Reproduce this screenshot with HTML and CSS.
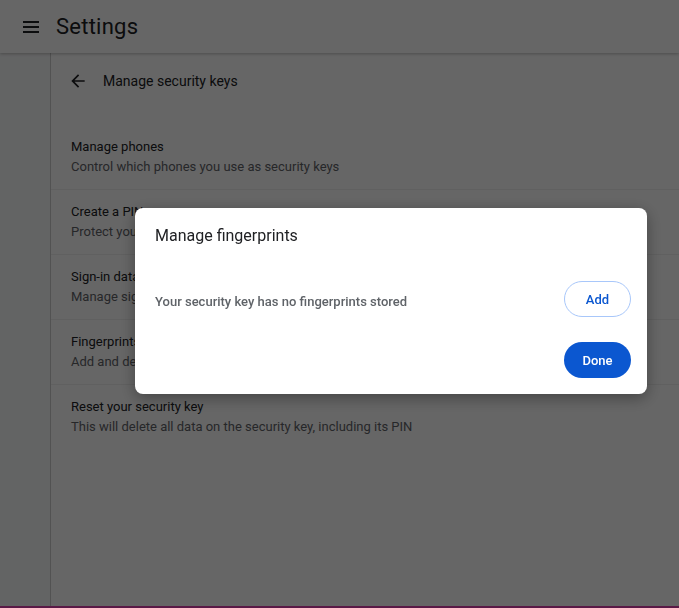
FILE: index.html
```html
<!DOCTYPE html>
<html lang="en">
<head>
    <meta charset="UTF-8">
    <meta name="viewport" content="width=device-width, initial-scale=1.0">
    <title>Settings - Manage security keys</title>
    <link rel="stylesheet" href="styles.css">
</head>
<body>
    <header class="toolbar">
        <button class="menu-button" aria-label="Main menu">
            <svg width="16" height="14" viewBox="0 0 16 14">
                <rect x="0" y="1" width="16" height="2" fill="currentColor"/>
                <rect x="0" y="6" width="16" height="2" fill="currentColor"/>
                <rect x="0" y="11" width="16" height="2" fill="currentColor"/>
            </svg>
        </button>
        <h1 class="toolbar-title">Settings</h1>
    </header>

    <div class="layout">
        <nav class="sidebar"></nav>

        <main class="card">
            <div class="subpage-title">
                <button class="back-button" aria-label="Back">
                    <svg width="20" height="20" viewBox="0 0 24 24">
                        <path d="M20 11H7.83l5.59-5.59L12 4l-8 8 8 8 1.41-1.41L7.83 13H20v-2z" fill="currentColor"/>
                    </svg>
                </button>
                <h2>Manage security keys</h2>
            </div>

            <div class="rows">
                <div class="row">
                    <div class="row-label">Manage phones</div>
                    <div class="row-sub">Control which phones you use as security keys</div>
                </div>
                <div class="row">
                    <div class="row-label">Create a PIN</div>
                    <div class="row-sub">Protect your security key with a PIN (Personal Identification Number)</div>
                </div>
                <div class="row">
                    <div class="row-label">Sign-in data</div>
                    <div class="row-sub">Manage sign-in data stored on your security key</div>
                </div>
                <div class="row">
                    <div class="row-label">Fingerprints</div>
                    <div class="row-sub">Add and delete fingerprints saved on your security key</div>
                </div>
                <div class="row">
                    <div class="row-label">Reset your security key</div>
                    <div class="row-sub">This will delete all data on the security key, including its PIN</div>
                </div>
            </div>
        </main>
    </div>

    <div class="bottom-edge"></div>

    <div class="scrim"></div>

    <div class="dialog" role="dialog">
        <div class="dialog-title">Manage fingerprints</div>
        <div class="dialog-body">
            <span class="dialog-text">Your security key has no fingerprints stored</span>
            <button class="pill outline">Add</button>
        </div>
        <div class="dialog-buttons">
            <button class="pill filled">Done</button>
        </div>
    </div>
</body>
</html>
```

FILE: styles.css
```css
* {
    margin: 0;
    padding: 0;
    box-sizing: border-box;
}

html, body {
    height: 100%;
}

body {
    font-family: Roboto, "Liberation Sans", sans-serif;
    font-size: 13px;
    color: #202124;
    background: #f8f9fa;
    display: flex;
    flex-direction: column;
    overflow: hidden;
}

button {
    font-family: inherit;
    border: none;
    background: none;
    cursor: pointer;
    color: inherit;
}

.toolbar {
    height: 53px;
    flex-shrink: 0;
    display: flex;
    align-items: center;
    background: #fff;
    box-shadow: 0 1px 3px rgba(0, 0, 0, 0.25);
    position: relative;
    z-index: 1;
}

.menu-button {
    width: 16px;
    height: 14px;
    margin-left: 23px;
    margin-top: 1px;
    display: flex;
    color: #202124;
}

.toolbar-title {
    font-size: 22px;
    font-weight: 400;
    letter-spacing: 0.25px;
    margin-left: 17px;
    color: #202124;
}

.layout {
    flex: 1;
    display: flex;
    min-height: 0;
}

.sidebar {
    width: 50px;
    flex-shrink: 0;
}

.card {
    flex: 1;
    background: #fff;
    border-left: 1px solid rgba(0, 0, 0, 0.2);
}

.subpage-title {
    height: 56px;
    display: flex;
    align-items: center;
    margin-bottom: 16px;
}

.back-button {
    width: 20px;
    height: 20px;
    margin-left: 17px;
    display: flex;
    color: #202124;
}

.subpage-title h2 {
    font-size: 14px;
    font-weight: 400;
    margin-left: 15px;
    color: #202124;
}

.row {
    padding: 12px 20px;
    line-height: 20px;
    border-bottom: 1px solid rgba(0, 0, 0, 0.06);
}

.row:last-child {
    border-bottom: none;
}

.row-sub {
    color: #5f6368;
}

.bottom-edge {
    height: 2px;
    flex-shrink: 0;
    background: #5a1946;
    position: relative;
    z-index: 3;
}

.scrim {
    position: fixed;
    inset: 0;
    background: rgba(0, 0, 0, 0.6);
    z-index: 2;
}

.dialog {
    position: fixed;
    left: 135px;
    top: 208px;
    width: 512px;
    height: 186px;
    background: #fff;
    border-radius: 8px;
    box-shadow: 0 4px 16px rgba(0, 0, 0, 0.35);
    padding: 18px 16px 15px 20px;
    display: flex;
    flex-direction: column;
    z-index: 4;
}

.dialog-title {
    font-size: 16px;
    line-height: 20px;
    color: #202124;
}

.dialog-body {
    display: flex;
    align-items: center;
    justify-content: space-between;
    margin-top: 35px;
}

.dialog-text {
    font-size: 13px;
    font-weight: 500;
    color: #5f6368;
    margin-top: 5px;
}

.dialog-buttons {
    display: flex;
    justify-content: flex-end;
    margin-top: 25px;
}

.pill {
    width: 67px;
    height: 36px;
    border-radius: 18px;
    font-size: 13px;
    font-weight: 500;
}

.pill.outline {
    border: 1px solid #a8c7fa;
    color: #0b57d0;
}

.pill.filled {
    background: #0b57d0;
    color: #fff;
}
```
